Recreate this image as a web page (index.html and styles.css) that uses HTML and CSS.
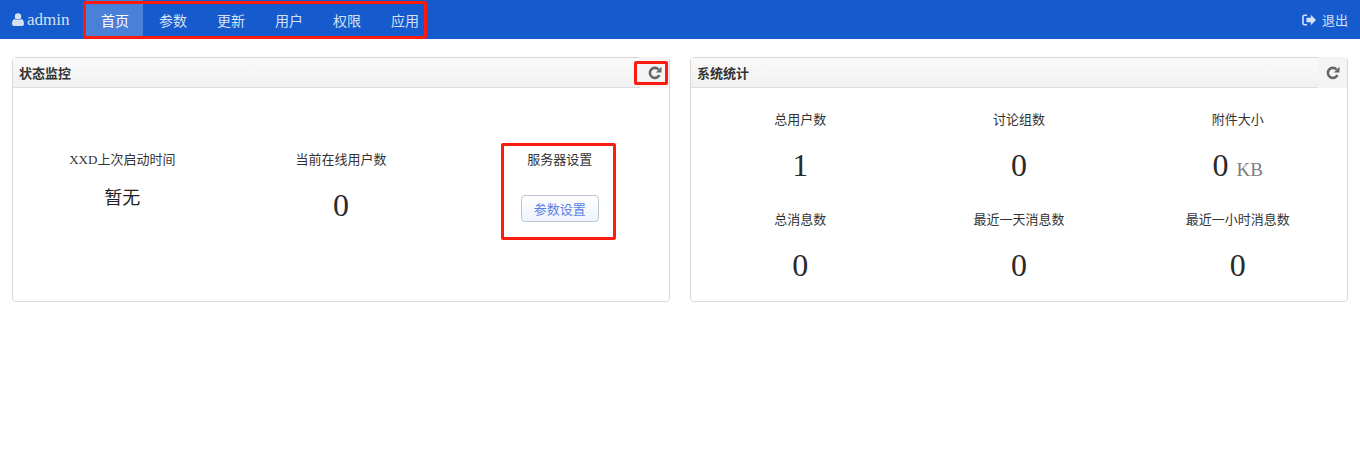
FILE: index.html
```html
<!DOCTYPE html>
<html lang="zh">
<head>
<meta charset="UTF-8">
<title>XXD</title>
<link rel="stylesheet" href="styles.css">
</head>
<body>

<header class="navbar">
  <div class="brand">
    <svg class="icon-user" viewBox="0 0 12 13"><circle cx="6" cy="3.400" r="3.200"/><path d="M0 11c0-3 1-4.800 2.800-5 .8.700 2 1.100 3.200 1.100s2.400-.4 3.200-1.100C11 6.200 12 8 12 11c0 1.200-.8 2-2 2H2c-1.200 0-2-.8-2-2z"/></svg>
    <span>admin</span>
  </div>
  <nav class="nav">
    <a class="nav-item active">首页</a>
    <a class="nav-item">参数</a>
    <a class="nav-item">更新</a>
    <a class="nav-item">用户</a>
    <a class="nav-item">权限</a>
    <a class="nav-item">应用</a>
  </nav>
  <a class="logout">
    <svg class="icon-logout" viewBox="0 0 14 12"><path d="M5 1.200H2.600C1.500 1.200 1 1.800 1 2.700v6.600c0 .9.500 1.500 1.600 1.500H5" fill="none" stroke="currentColor" stroke-width="1.600"/><path d="M4.500 3.800h4.300V.8L14 6l-5.200 5.200v-3H4.500z"/></svg>
    <span>退出</span>
  </a>
  <div class="mark mark-nav"></div>
</header>

<main class="content">

  <section class="panel">
    <div class="panel-head">
      <h3>状态监控</h3>
      <button class="refresh">
        <svg viewBox="0 0 14 14"><path class="arc" d="M11.400 9A5 5 0 1 1 10.600 3.500"/><path class="tip" d="M13.500 .8v5.700H7.800z"/></svg>
      </button>
    </div>
    <div class="panel-body monitor">
      <div class="cell">
        <div class="label">XXD上次启动时间</div>
        <div class="none">暂无</div>
      </div>
      <div class="cell">
        <div class="label">当前在线用户数</div>
        <div class="num">0</div>
      </div>
      <div class="cell">
        <div class="label">服务器设置</div>
        <button class="btn">参数设置</button>
      </div>
    </div>
    <div class="mark mark-refresh"></div>
    <div class="mark mark-server"></div>
  </section>

  <section class="panel">
    <div class="panel-head">
      <h3>系统统计</h3>
      <button class="refresh">
        <svg viewBox="0 0 14 14"><path class="arc" d="M11.400 9A5 5 0 1 1 10.600 3.500"/><path class="tip" d="M13.500 .8v5.700H7.800z"/></svg>
      </button>
    </div>
    <div class="panel-body stats">
      <div class="cell"><div class="label">总用户数</div><div class="num">1</div></div>
      <div class="cell"><div class="label">讨论组数</div><div class="num">0</div></div>
      <div class="cell"><div class="label">附件大小</div><div class="num">0 <small>KB</small></div></div>
      <div class="cell"><div class="label">总消息数</div><div class="num">0</div></div>
      <div class="cell"><div class="label">最近一天消息数</div><div class="num">0</div></div>
      <div class="cell"><div class="label">最近一小时消息数</div><div class="num">0</div></div>
    </div>
  </section>

</main>

</body>
</html>
```

FILE: styles.css
```css
* { margin: 0; padding: 0; box-sizing: border-box; }

body {
  background: #fff;
  color: #333;
  font-family: "Liberation Serif", "Noto Sans CJK SC", serif;
  font-size: 13px;
}

/* Navbar */
.navbar {
  position: relative;
  display: flex;
  align-items: center;
  height: 39px;
  padding: 0 12px;
  background: #155bcd;
  color: #d5e0f3;
}

.brand {
  display: flex;
  align-items: center;
  gap: 3px;
  width: 74px;
  font-size: 17px;
}

.icon-user { width: 12px; height: 13px; fill: currentColor; }

.nav { display: flex; height: 100%; }

.nav-item {
  display: flex;
  align-items: center;
  padding: 0 15px;
  font-size: 14px;
  width: 58px;
  white-space: nowrap;
}

.nav-item.active {
  width: 57px;
  margin-right: 1px;
  padding-right: 14px;
  background: #4a80d8;
  color: #fff;
}

.logout {
  display: flex;
  align-items: center;
  gap: 6px;
  margin-left: auto;
  font-size: 13px;
}

.icon-logout { width: 14px; height: 12px; fill: currentColor; }

/* Red annotation boxes */
.mark {
  position: absolute;
  border: 3px solid #fb1c0f;
  border-radius: 2px;
  pointer-events: none;
}
.mark-nav { left: 83px; top: 1px; width: 344px; height: 38px; }
.mark-refresh { right: 1px; top: 3px; width: 34px; height: 24px; }
.mark-server { left: 488px; top: 85px; width: 115px; height: 97px; }

/* Panels */
.content {
  display: grid;
  grid-template-columns: 658px 658px;
  gap: 20px;
  padding: 18px 12px 0;
}

.panel {
  position: relative;
  height: 245px;
  border: 1px solid #d8d8d8;
  border-radius: 4px;
}

.panel-head {
  display: flex;
  align-items: center;
  justify-content: space-between;
  height: 30px;
  padding-left: 6px;
  background: linear-gradient(#fafafa, #f1f1f1);
  border-bottom: 1px solid #ddd;
}

.panel-head h3 {
  font-size: 13px;
  font-weight: bold;
  color: #333;
}

.refresh {
  display: flex;
  align-items: center;
  justify-content: center;
  width: 29px;
  height: 31px;
  border: 0;
  background: #f4f4f4;
}
.refresh svg { width: 14px; height: 14px; }
.refresh .arc { fill: none; stroke: #666; stroke-width: 2.600; }
.refresh .tip { fill: #666; }

.panel-body { display: grid; grid-template-columns: repeat(3, 1fr); }

.monitor { padding-top: 63px; }
.stats { grid-auto-rows: 100px; padding-top: 23px; }

.cell { text-align: center; }

.label {
  font-size: 13px;
  line-height: 18px;
  white-space: nowrap;
}

.none {
  margin-top: 17px;
  font-size: 18px;
  line-height: 24px;
  color: #222;
}

.num {
  margin-top: 18px;
  font-size: 32px;
  line-height: 36px;
  color: #2a2a2a;
}

.num small {
  font-size: 19px;
  color: #808080;
}

.btn {
  display: block;
  margin: 26px auto 0;
  width: 78px;
  height: 27px;
  border: 1px solid #bcc6d6;
  border-radius: 4px;
  background: linear-gradient(#fff, #eef3fd);
  color: #5b7fe6;
  font-family: inherit;
  font-size: 13px;
}
```
